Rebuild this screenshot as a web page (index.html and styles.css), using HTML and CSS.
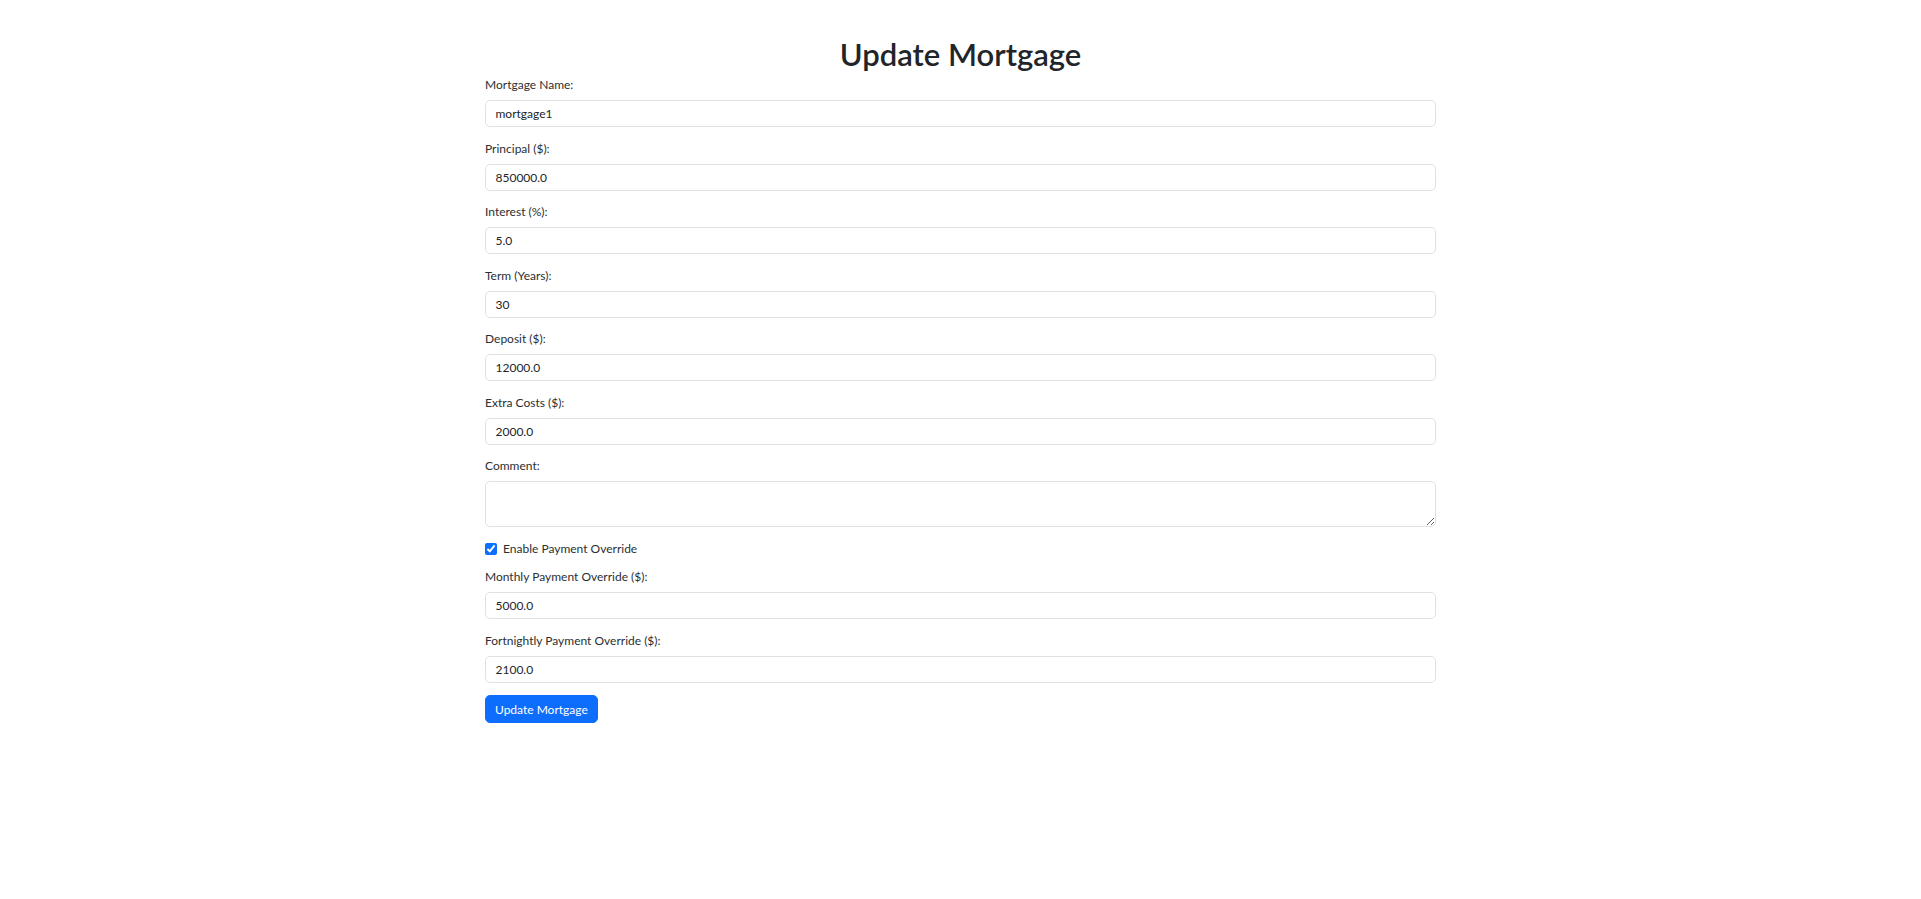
FILE: index.html
```html
<!DOCTYPE html>
<html lang="en">
<head>
<meta charset="utf-8">
<title>Update Mortgage</title>
<link rel="stylesheet" href="styles.css">
</head>
<body>
<main class="container">
  <h2 class="title">Update Mortgage</h2>
  <form class="form">
    <div class="group">
      <label class="label" for="name">Mortgage Name:</label>
      <input class="control" id="name" type="text" value="mortgage1">
    </div>
    <div class="group">
      <label class="label" for="principal">Principal ($):</label>
      <input class="control" id="principal" type="text" value="850000.0">
    </div>
    <div class="group">
      <label class="label" for="interest">Interest (%):</label>
      <input class="control" id="interest" type="text" value="5.0">
    </div>
    <div class="group">
      <label class="label" for="term">Term (Years):</label>
      <input class="control" id="term" type="text" value="30">
    </div>
    <div class="group">
      <label class="label" for="deposit">Deposit ($):</label>
      <input class="control" id="deposit" type="text" value="12000.0">
    </div>
    <div class="group">
      <label class="label" for="extra">Extra Costs ($):</label>
      <input class="control" id="extra" type="text" value="2000.0">
    </div>
    <div class="group">
      <label class="label" for="comment">Comment:</label>
      <textarea class="control area" id="comment"></textarea>
    </div>
    <div class="check-row">
      <input class="check" id="override" type="checkbox" checked>
      <label class="check-label" for="override">Enable Payment Override</label>
    </div>
    <div class="group">
      <label class="label" for="monthly">Monthly Payment Override ($):</label>
      <input class="control" id="monthly" type="text" value="5000.0">
    </div>
    <div class="group">
      <label class="label" for="fortnightly">Fortnightly Payment Override ($):</label>
      <input class="control" id="fortnightly" type="text" value="2100.0">
    </div>
    <button class="btn" type="button">Update Mortgage</button>
  </form>
</main>
</body>
</html>
```

FILE: styles.css
```css
* { box-sizing: border-box; }

body {
  margin: 0;
  background: #ffffff;
  color: #212529;
  font-family: Lato, "Noto Sans", "Liberation Sans", sans-serif;
  font-size: 12px;
}

.container {
  width: 951px;
  margin: 0 auto;
}

.title {
  margin: 36px 0 3px;
  text-align: center;
  font-size: 31px;
  line-height: 37px;
  font-weight: 600;
  color: #212529;
}

.form {
  display: flex;
  flex-direction: column;
  align-items: flex-start;
}

.group {
  width: 100%;
  margin-bottom: 12.5px;
}

.label {
  display: block;
  font-size: 12px;
  line-height: 18px;
  margin-bottom: 6px;
  color: #2b2f33;
}

.control {
  display: block;
  width: 100%;
  height: 27px;
  padding: 0 9.5px;
  font-family: inherit;
  font-size: 12px;
  color: #212529;
  background: #ffffff;
  border: 1px solid #dee2e6;
  border-radius: 5px;
  outline: none;
}

.area {
  height: 46px;
  padding: 5px 9.5px;
  resize: vertical;
}

.check-row {
  display: flex;
  align-items: center;
  gap: 6px;
  height: 18px;
  margin-bottom: 10.5px;
}

.check {
  width: 12px;
  height: 12px;
  margin: 0;
  accent-color: #0d6efd;
}

.check-label {
  font-size: 12px;
  line-height: 18px;
  color: #2b2f33;
}

.btn {
  height: 28px;
  padding: 0 9px;
  font-family: inherit;
  font-size: 12px;
  color: #ffffff;
  background: #0d6efd;
  border: 1px solid #0d6efd;
  border-radius: 5px;
  cursor: pointer;
}
```
